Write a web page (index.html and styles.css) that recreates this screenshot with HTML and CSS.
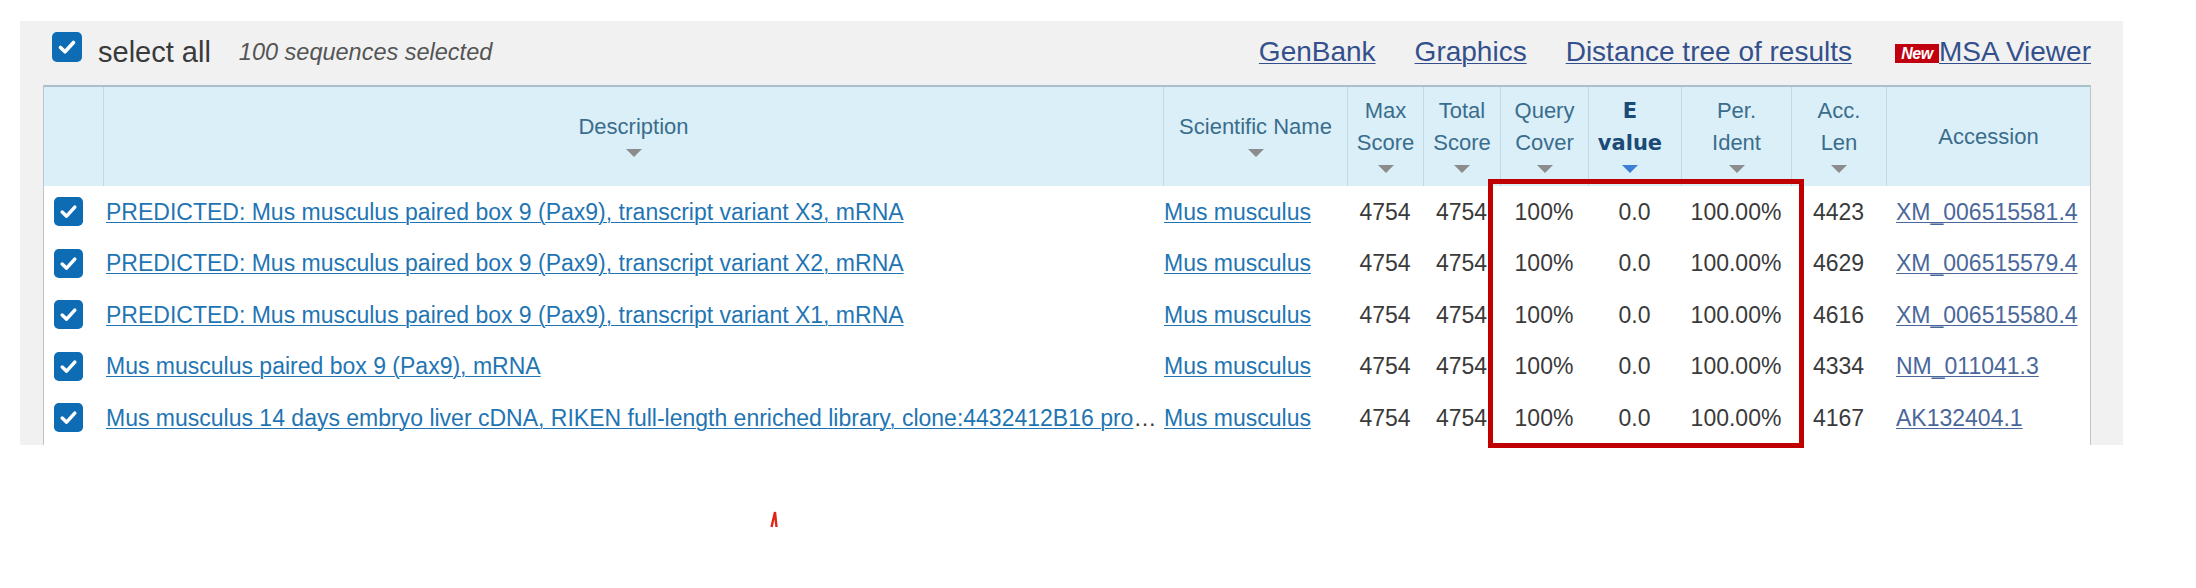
FILE: index.html
```html
<!DOCTYPE html>
<html lang="en">
<head>
<meta charset="utf-8">
<title>BLAST results</title>
<link rel="stylesheet" href="styles.css">
</head>
<body>
<section class="panel">
  <div class="toolbar">
    <span class="cb cb-all"><svg viewBox="0 0 30 30" width="30" height="30"><rect width="30" height="30" rx="5" fill="#0d6cb4"/><path d="M8.5 15.5 L13 19.8 L21.5 10.5" fill="none" stroke="#fff" stroke-width="3.6" stroke-linecap="round" stroke-linejoin="round"/></svg></span>
    <span class="select-all">select all</span>
    <span class="count">100 sequences selected</span>
    <nav class="links">
      <a href="#">GenBank</a>
      <a href="#">Graphics</a>
      <a href="#">Distance tree of results</a>
      <span class="msa"><span class="new">New</span><a href="#">MSA Viewer</a></span>
    </nav>
  </div>
  <div class="table">
    <div class="thead">
      <div class="th th-cb"></div>
      <div class="th"><span>Description</span><i class="sort"></i></div>
      <div class="th"><span>Scientific Name</span><i class="sort"></i></div>
      <div class="th"><span>Max<br>Score</span><i class="sort"></i></div>
      <div class="th"><span>Total<br>Score</span><i class="sort"></i></div>
      <div class="th"><span>Query<br>Cover</span><i class="sort"></i></div>
      <div class="th th-active"><span>E<br>value</span><i class="sort sort-active"></i></div>
      <div class="th"><span>Per.<br>Ident</span><i class="sort"></i></div>
      <div class="th"><span>Acc.<br>Len</span><i class="sort"></i></div>
      <div class="th"><span>Accession</span></div>
    </div>

    <div class="row">
      <div class="td td-cb"><span class="cb"><svg viewBox="0 0 30 30" width="29" height="29"><rect width="30" height="30" rx="5" fill="#0d6cb4"/><path d="M8.5 15.5 L13 19.8 L21.5 10.5" fill="none" stroke="#fff" stroke-width="3.6" stroke-linecap="round" stroke-linejoin="round"/></svg></span></div>
      <div class="td td-desc"><a href="#">PREDICTED: Mus musculus paired box 9 (Pax9), transcript variant X3, mRNA</a></div>
      <div class="td td-sci"><a href="#">Mus musculus</a></div>
      <div class="td td-num">4754</div>
      <div class="td td-num">4754</div>
      <div class="td td-num">100%</div>
      <div class="td td-num">0.0</div>
      <div class="td td-num">100.00%</div>
      <div class="td td-num">4423</div>
      <div class="td td-acc"><a href="#">XM_006515581.4</a></div>
    </div>

    <div class="row">
      <div class="td td-cb"><span class="cb"><svg viewBox="0 0 30 30" width="29" height="29"><rect width="30" height="30" rx="5" fill="#0d6cb4"/><path d="M8.5 15.5 L13 19.8 L21.5 10.5" fill="none" stroke="#fff" stroke-width="3.6" stroke-linecap="round" stroke-linejoin="round"/></svg></span></div>
      <div class="td td-desc"><a href="#">PREDICTED: Mus musculus paired box 9 (Pax9), transcript variant X2, mRNA</a></div>
      <div class="td td-sci"><a href="#">Mus musculus</a></div>
      <div class="td td-num">4754</div>
      <div class="td td-num">4754</div>
      <div class="td td-num">100%</div>
      <div class="td td-num">0.0</div>
      <div class="td td-num">100.00%</div>
      <div class="td td-num">4629</div>
      <div class="td td-acc"><a href="#">XM_006515579.4</a></div>
    </div>

    <div class="row">
      <div class="td td-cb"><span class="cb"><svg viewBox="0 0 30 30" width="29" height="29"><rect width="30" height="30" rx="5" fill="#0d6cb4"/><path d="M8.5 15.5 L13 19.8 L21.5 10.5" fill="none" stroke="#fff" stroke-width="3.6" stroke-linecap="round" stroke-linejoin="round"/></svg></span></div>
      <div class="td td-desc"><a href="#">PREDICTED: Mus musculus paired box 9 (Pax9), transcript variant X1, mRNA</a></div>
      <div class="td td-sci"><a href="#">Mus musculus</a></div>
      <div class="td td-num">4754</div>
      <div class="td td-num">4754</div>
      <div class="td td-num">100%</div>
      <div class="td td-num">0.0</div>
      <div class="td td-num">100.00%</div>
      <div class="td td-num">4616</div>
      <div class="td td-acc"><a href="#">XM_006515580.4</a></div>
    </div>

    <div class="row">
      <div class="td td-cb"><span class="cb"><svg viewBox="0 0 30 30" width="29" height="29"><rect width="30" height="30" rx="5" fill="#0d6cb4"/><path d="M8.5 15.5 L13 19.8 L21.5 10.5" fill="none" stroke="#fff" stroke-width="3.6" stroke-linecap="round" stroke-linejoin="round"/></svg></span></div>
      <div class="td td-desc"><a href="#">Mus musculus paired box 9 (Pax9), mRNA</a></div>
      <div class="td td-sci"><a href="#">Mus musculus</a></div>
      <div class="td td-num">4754</div>
      <div class="td td-num">4754</div>
      <div class="td td-num">100%</div>
      <div class="td td-num">0.0</div>
      <div class="td td-num">100.00%</div>
      <div class="td td-num">4334</div>
      <div class="td td-acc"><a href="#">NM_011041.3</a></div>
    </div>

    <div class="row">
      <div class="td td-cb"><span class="cb"><svg viewBox="0 0 30 30" width="29" height="29"><rect width="30" height="30" rx="5" fill="#0d6cb4"/><path d="M8.5 15.5 L13 19.8 L21.5 10.5" fill="none" stroke="#fff" stroke-width="3.6" stroke-linecap="round" stroke-linejoin="round"/></svg></span></div>
      <div class="td td-desc"><a href="#">Mus musculus 14 days embryo liver cDNA, RIKEN full-length enriched library, clone:4432412B16 pro</a>…</div>
      <div class="td td-sci"><a href="#">Mus musculus</a></div>
      <div class="td td-num">4754</div>
      <div class="td td-num">4754</div>
      <div class="td td-num">100%</div>
      <div class="td td-num">0.0</div>
      <div class="td td-num">100.00%</div>
      <div class="td td-num">4167</div>
      <div class="td td-acc"><a href="#">AK132404.1</a></div>
    </div>
  </div>
</section>
<div class="highlight"></div>
<svg class="mark" viewBox="0 0 12 18" width="12" height="18"><path d="M2.5 17 L6 2 L7.5 17" fill="none" stroke="#e2231a" stroke-width="2.4"/></svg>
</body>
</html>
```
FILE: styles.css
```css
html, body {
  margin: 0;
  padding: 0;
  background: #ffffff;
}

body {
  position: relative;
  width: 2196px;
  height: 588px;
  overflow: hidden;
  font-family: "Liberation Sans", Arial, sans-serif;
  color: #383838;
}

.panel {
  margin: 21px 0 0 20px;
  width: 2103px;
  height: 424px;
  box-sizing: border-box;
  padding: 0 32px 0 23px;
  background: #f1f1f1;
  display: flex;
  flex-direction: column;
  overflow: hidden;
}

/* ---------- toolbar ---------- */
.toolbar {
  height: 64px;
  flex: none;
  box-sizing: border-box;
  padding: 11px 0 0 9px;
  display: flex;
  align-items: flex-start;
}

.cb {
  display: block;
  line-height: 0;
}

.cb svg {
  display: block;
}

.cb-all {
  margin-right: 16px;
}

.select-all {
  font-size: 29px;
  line-height: 40px;
  color: #3a3a3a;
  margin-right: 28px;
}

.count {
  font-size: 23.5px;
  line-height: 40px;
  font-style: italic;
  color: #555555;
}

.links {
  margin-left: auto;
  display: flex;
  align-items: flex-start;
  gap: 39px;
}

.links a {
  font-size: 28px;
  line-height: 40px;
  color: #33508c;
  text-decoration: underline;
  text-decoration-thickness: 1px;
  text-underline-offset: 2px;
}

.msa {
  display: flex;
  align-items: flex-start;
  margin-left: 4px;
}

.new {
  display: block;
  margin-top: 12px;
  width: 44px;
  height: 19px;
  background: #c1000f;
  color: #ffffff;
  font-size: 16px;
  line-height: 19px;
  font-weight: bold;
  font-style: italic;
  text-align: center;
  letter-spacing: -0.5px;
}

/* ---------- table ---------- */
.table {
  flex: 1;
  background: #ffffff;
  border-left: 1px solid #b8c5cd;
  border-right: 1px solid #b8c5cd;
}

.thead,
.row {
  display: grid;
  grid-template-columns: 59px 1060px 184px 76px 77px 88px 93px 110px 95px 204px;
}

.thead {
  height: 101px;
  box-sizing: border-box;
  border-top: 2px solid #a9bfcc;
  background: #daeff8;
}

.th {
  border-left: 1px solid #c4d8e2;
  display: flex;
  flex-direction: column;
  align-items: center;
  justify-content: center;
  font-size: 22px;
  line-height: 32px;
  color: #3a6d8c;
  text-align: center;
  white-space: nowrap;
}

.th-cb {
  border-left: none;
}

.th-active {
  font-family: "DejaVu Sans", Verdana, sans-serif;
  font-weight: bold;
  font-size: 21px;
  color: #1b4a76;
  padding-right: 10px;
}

.sort {
  display: block;
  width: 0;
  height: 0;
  margin: 6px auto 6px;
  border-left: 8px solid transparent;
  border-right: 8px solid transparent;
  border-top: 8px solid #8c8c8c;
}

.sort-active {
  border-top-color: #3d7fd6;
}

.row {
  height: 51.5px;
  align-items: center;
  font-size: 23px;
  line-height: 28px;
}

.td {
  white-space: nowrap;
  overflow: hidden;
  text-overflow: ellipsis;
  color: #3a3a3a;
}

.td a {
  text-decoration: underline;
  text-decoration-thickness: 1px;
  text-underline-offset: 2px;
}

.td-cb {
  padding-left: 10px;
}

.td-desc {
  padding: 0 4px 0 3px;
}

.td-desc a,
.td-sci a {
  color: #1f75b3;
}

.td-sci {
  padding-left: 1px;
}

.td-num {
  text-align: center;
}

.td-acc {
  padding-left: 10px;
}

.td-acc a {
  color: #4a679b;
}

/* ---------- annotations over the screenshot ---------- */
.highlight {
  position: absolute;
  left: 1488px;
  top: 179px;
  width: 316px;
  height: 269px;
  box-sizing: border-box;
  border: 5px solid #c00000;
}

.mark {
  position: absolute;
  left: 769px;
  top: 510px;
}
```
